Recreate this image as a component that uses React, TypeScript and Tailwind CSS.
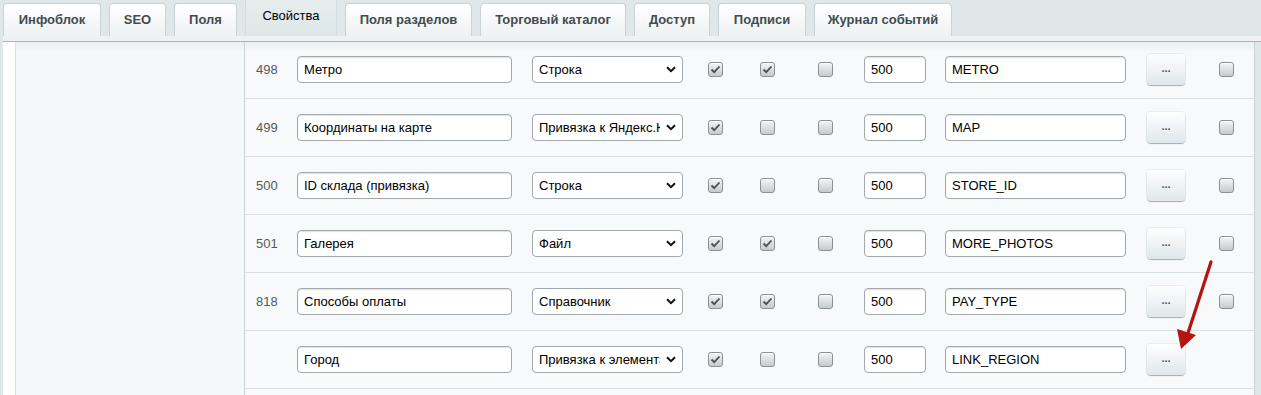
import React from "react";

type Row = {
  id: string;
  name: string;
  type: string;
  c: [boolean, boolean, boolean];
  sort: string;
  code: string;
  last: boolean;
};

const rows: Row[] = [
  { id: "498", name: "Метро", type: "Строка", c: [true, true, false], sort: "500", code: "METRO", last: true },
  { id: "499", name: "Координаты на карте", type: "Привязка к Яндекс.Карте", c: [true, false, false], sort: "500", code: "MAP", last: true },
  { id: "500", name: "ID склада (привязка)", type: "Строка", c: [true, false, false], sort: "500", code: "STORE_ID", last: true },
  { id: "501", name: "Галерея", type: "Файл", c: [true, true, false], sort: "500", code: "MORE_PHOTOS", last: true },
  { id: "818", name: "Способы оплаты", type: "Справочник", c: [true, true, false], sort: "500", code: "PAY_TYPE", last: true },
  { id: "", name: "Город", type: "Привязка к элементам", c: [true, false, false], sort: "500", code: "LINK_REGION", last: false },
];

const tabs = [
  { label: "Инфоблок", w: "w-[98px]" },
  { label: "SEO", w: "w-[57px]" },
  { label: "Поля", w: "w-[63px]" },
  { label: "Свойства", w: "w-[92px]", active: true },
  { label: "Поля разделов", w: "w-[127px]" },
  { label: "Торговый каталог", w: "w-[146px]" },
  { label: "Доступ", w: "w-[76px]" },
  { label: "Подписи", w: "w-[88px]" },
  { label: "Журнал событий", w: "w-[138px]" },
];

function Checkbox({ checked, className = "" }: { checked: boolean; className?: string }) {
  return (
    <div
      className={`w-[15px] h-[15px] shrink-0 rounded-[3px] border border-[#8a9194] bg-gradient-to-b from-[#f4f5f5] to-[#c6cacb] shadow-[inset_0_1px_0_rgba(255,255,255,0.9)] flex items-center justify-center ${className}`}
    >
      {checked && (
        <svg width="11" height="9" viewBox="0 0 11 9">
          <path d="M1.5 4.5 L4.2 7.2 L9.5 1.5" fill="none" stroke="#4a4f51" strokeWidth="1.8" />
        </svg>
      )}
    </div>
  );
}

function TextInput({ value, className = "" }: { value: string; className?: string }) {
  return (
    <div
      className={`h-[27px] shrink-0 rounded-[4px] border border-[#a3aaad] bg-white shadow-[inset_0_1px_1px_rgba(0,0,0,0.12)] pl-[6px] flex items-center text-[13px] text-black whitespace-nowrap overflow-hidden ${className}`}
    >
      {value}
    </div>
  );
}

function Select({ value }: { value: string }) {
  return (
    <div className="ml-[20px] w-[151px] h-[27px] shrink-0 rounded-[4px] border border-[#a3aaad] bg-white pl-[6px] pr-[6px] flex items-center text-[13px] text-black">
      <span className="w-[121px] overflow-hidden whitespace-nowrap">{value}</span>
      <svg className="ml-auto" width="10" height="7" viewBox="0 0 10 7">
        <path d="M1 1.2 L5 5.2 L9 1.2" fill="none" stroke="#111" strokeWidth="2" />
      </svg>
    </div>
  );
}

function DotsButton() {
  return (
    <div className="ml-[21px] w-[38px] h-[31px] shrink-0 rounded-[4px] bg-gradient-to-b from-[#ffffff] to-[#dfe7ea] shadow-[0_1px_1px_rgba(0,0,0,0.28),0_0_0_1px_rgba(0,0,0,0.05)] flex items-center justify-center text-[11px] font-bold text-[#4b5558] pb-[3px]">
      ...
    </div>
  );
}

export default function App() {
  return (
    <div
      className="relative w-full h-[395px] overflow-hidden bg-[#dfe7e9]"
      style={{ fontFamily: '"Liberation Sans", Arial, sans-serif' }}
    >
      {/* Tabs */}
      <div className="flex items-end gap-[8px] pl-[3px] h-[36px]">
        {tabs.map((t) =>
          t.active ? (
            <div
              key={t.label}
              className={`${t.w} h-[36px] border-l border-r border-[#d3dcdf] bg-gradient-to-b from-[#e6edef] to-[#dfe7e9] flex items-center justify-center pb-[4px] text-[13px] text-black`}
            >
              {t.label}
            </div>
          ) : (
            <div
              key={t.label}
              className={`${t.w} h-[33px] rounded-t-[4px] border border-b-0 border-[#c9d2d5] bg-gradient-to-b from-[#ffffff] to-[#eef2f3] flex items-center justify-center text-[13px] font-bold text-[#424c50]`}
            >
              {t.label}
            </div>
          )
        )}
      </div>

      {/* Content */}
      <div className="ml-[3px]">
        <div className="h-[6px] bg-[#eef2f3] border-b border-[#a9b4b7]" />
        <div className="flex h-[360px]">
          <div className="w-[13px] bg-white border-r border-[#dbe3e5]" />
          <div className="w-[229px] bg-gradient-to-b from-[#e9eff1] to-[#f5f8f9] bg-[length:100%_10px] bg-no-repeat bg-[#f5f8f9] border-r border-[#c9d2d5]" />
          <div className="w-[1010px] bg-[#f7f9fa] border-r border-[#c9d2d5]">
            {rows.map((r, i) => (
              <div
                key={r.code}
                className={`flex items-center border-b border-[#d9e0e2] ${i === 0 ? "h-[57px] pb-[1px] bg-gradient-to-b from-[#eaf0f1] to-[#f7f9fa] bg-[length:100%_10px] bg-no-repeat" : "h-[58px]"}`}
              >
                <div className="w-[52px] pl-[11px] text-[13px] text-[#555a5c] shrink-0">{r.id}</div>
                <TextInput value={r.name} className="w-[215px]" />
                <Select value={r.type} />
                <Checkbox checked={r.c[0]} className="ml-[25px]" />
                <Checkbox checked={r.c[1]} className="ml-[37px]" />
                <Checkbox checked={r.c[2]} className="ml-[43px]" />
                <TextInput value={r.sort} className="ml-[31px] w-[62px]" />
                <TextInput value={r.code} className="ml-[19px] w-[181px]" />
                <DotsButton />
                {r.last && <Checkbox checked={false} className="ml-[34px]" />}
              </div>
            ))}
          </div>
        </div>
      </div>

      {/* Annotation arrow */}
      <svg className="absolute left-0 top-0 pointer-events-none" width="1261" height="395">
        <line x1="1211" y1="262" x2="1188" y2="333" stroke="#b8130e" strokeWidth="3.2" strokeLinecap="round" />
        <polygon points="1181,349 1177,329 1196,335" fill="#b8130e" />
      </svg>
    </div>
  );
}
